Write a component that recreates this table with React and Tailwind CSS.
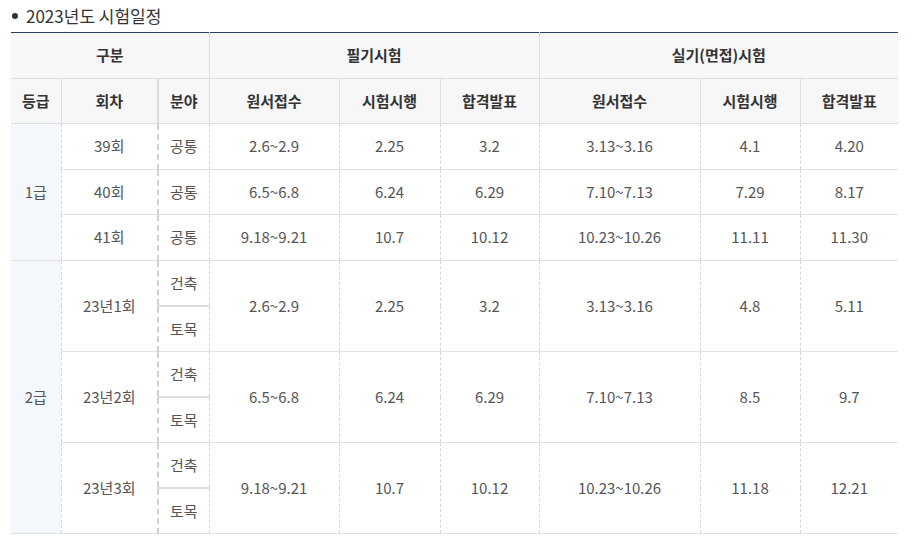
const groups = [
  {
    grade: '1급',
    rows: [
      { round: '39회', fields: ['공통'], d: ['2.6~2.9', '2.25', '3.2', '3.13~3.16', '4.1', '4.20'] },
      { round: '40회', fields: ['공통'], d: ['6.5~6.8', '6.24', '6.29', '7.10~7.13', '7.29', '8.17'] },
      { round: '41회', fields: ['공통'], d: ['9.18~9.21', '10.7', '10.12', '10.23~10.26', '11.11', '11.30'] },
    ],
  },
  {
    grade: '2급',
    rows: [
      { round: '23년1회', fields: ['건축', '토목'], d: ['2.6~2.9', '2.25', '3.2', '3.13~3.16', '4.8', '5.11'] },
      { round: '23년2회', fields: ['건축', '토목'], d: ['6.5~6.8', '6.24', '6.29', '7.10~7.13', '8.5', '9.7'] },
      { round: '23년3회', fields: ['건축', '토목'], d: ['9.18~9.21', '10.7', '10.12', '10.23~10.26', '11.18', '12.21'] },
    ],
  },
];

const th = 'border border-[#dddddd] font-bold text-[#333] text-[15px] text-center';
const td =
  'border-y border-[#e1e1e1] border-x border-x-[#d6d6d6] [border-left-style:dashed] [border-right-style:dashed] text-[#555] text-[15px] text-center';

const App = () => {
  const heights = [46, 45, 46, 45, 46, 45, 46, 45, 46];
  let idx = 0;
  const body = [];
  groups.forEach((g, gi) => {
    const span = g.rows.reduce((n, r) => n + r.fields.length, 0);
    g.rows.forEach((r, ri) => {
      r.fields.forEach((f, fi) => {
        const h = heights[idx++];
        body.push(
          <tr key={`${gi}-${ri}-${fi}`} style={{ height: h }}>
            {ri === 0 && fi === 0 && (
              <td rowSpan={span} className={`${td} border-l-0 bg-[#f4f8fd]`}>
                {g.grade}
              </td>
            )}
            {fi === 0 && (
              <td rowSpan={r.fields.length} className={td}>
                {r.round}
              </td>
            )}
            <td
              className={`${td} border-l-2 border-l-[#d0d0d0] ${
                r.fields.length > 1 && fi === 0 ? 'border-b-2 border-b-[#dcdcdc]' : ''
              }`}
            >
              {f}
            </td>
            {fi === 0 &&
              r.d.map((v, i) => (
                <td key={i} rowSpan={r.fields.length} className={`${td} ${i === 5 ? 'border-r-0' : ''}`}>
                  {v}
                </td>
              ))}
          </tr>
        );
      });
    });
  });

  return (
    <div
      className="bg-white w-[913px] h-[548px] overflow-hidden pl-[11px] pr-[15px]"
      style={{ fontFamily: '"Noto Sans CJK KR", "Noto Sans", sans-serif' }}
    >
      <div className="flex items-center h-[30px] pt-[1px] text-[17px] text-[#333]">
        <span className="w-[6px] h-[6px] rounded-full bg-[#333] ml-[1px] mr-[8px]"></span>
        <span>2023년도 시험일정</span>
      </div>
      <table className="w-[887px] border-collapse border-t border-t-[#2f3d5c] table-fixed mt-[2px]">
        <colgroup>
          <col className="w-[50px]" />
          <col className="w-[97px]" />
          <col className="w-[51px]" />
          <col className="w-[130px]" />
          <col className="w-[101px]" />
          <col className="w-[99px]" />
          <col className="w-[161px]" />
          <col className="w-[100px]" />
          <col className="w-[98px]" />
        </colgroup>
        <thead className="bg-[#f7f7f7]">
          <tr className="h-[46px]">
            <th colSpan={3} className={`${th} border-l-0 border-t-[#2f3d5c]`}>구분</th>
            <th colSpan={3} className={`${th} border-t-[#2f3d5c]`}>필기시험</th>
            <th colSpan={3} className={`${th} border-r-0 border-t-[#2f3d5c]`}>실기(면접)시험</th>
          </tr>
          <tr className="h-[45px]">
            <th className={`${th} border-l-0`}>등급</th>
            <th className={th}>회차</th>
            <th className={`${th} border-l-2`}>분야</th>
            <th className={th}>원서접수</th>
            <th className={th}>시험시행</th>
            <th className={th}>합격발표</th>
            <th className={th}>원서접수</th>
            <th className={th}>시험시행</th>
            <th className={`${th} border-r-0`}>합격발표</th>
          </tr>
        </thead>
        <tbody>{body}</tbody>
      </table>
    </div>
  );
};

export default App;
